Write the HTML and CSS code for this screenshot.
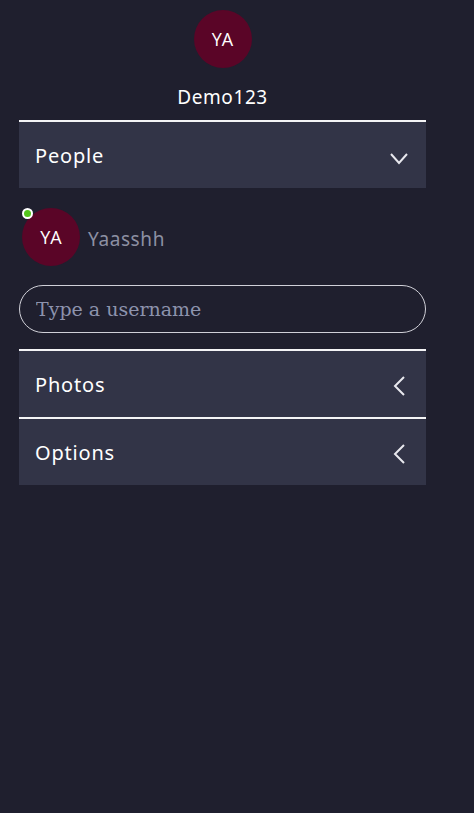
FILE: index.html
```html
<!DOCTYPE html>
<html>
<head>
<meta charset="utf-8">
<link rel="stylesheet" href="styles.css">
</head>
<body>
<aside class="sidebar">
  <header class="profile">
    <div class="avatar avatar-lg">YA</div>
    <div class="profile-name">Demo123</div>
  </header>

  <section class="panel">
    <div class="panel-head">
      <span class="panel-title">People</span>
      <svg class="chev" width="20" height="14" viewBox="0 0 20 14"><path d="M2 2 L10 11 L18 2" fill="none" stroke="#e8e8ee" stroke-width="2"/></svg>
    </div>
  </section>

  <div class="people">
    <div class="contact">
      <div class="avatar-wrap">
        <div class="avatar avatar-md">YA</div>
        <span class="status"></span>
      </div>
      <span class="contact-name">Yaasshh</span>
    </div>
    <input class="search" type="text" placeholder="Type a username">
  </div>

  <section class="panel">
    <div class="panel-head">
      <span class="panel-title">Photos</span>
      <svg class="chev chev-left" width="14" height="20" viewBox="0 0 14 20"><path d="M12 1 L3 10 L12 19" fill="none" stroke="#e8e8ee" stroke-width="2"/></svg>
    </div>
  </section>
  <section class="panel">
    <div class="panel-head">
      <span class="panel-title">Options</span>
      <svg class="chev chev-left" width="14" height="20" viewBox="0 0 14 20"><path d="M12 1 L3 10 L12 19" fill="none" stroke="#e8e8ee" stroke-width="2"/></svg>
    </div>
  </section>
</aside>
</body>
</html>
```

FILE: styles.css
```css
html, body {
  margin: 0;
  padding: 0;
  background: #1f1f2e;
  height: 100%;
}
body {
  font-family: "Noto Sans", "Lato", sans-serif;
  color: #fff;
}
.sidebar {
  width: 445px;
  box-sizing: border-box;
  padding: 10px 19px 0;
  display: flex;
  flex-direction: column;
}
.profile {
  display: flex;
  flex-direction: column;
  align-items: center;
}
.avatar {
  border-radius: 50%;
  background: #5a0527;
  color: #fff;
  display: flex;
  align-items: center;
  justify-content: center;
  font-family: "Open Sans", sans-serif;
  font-size: 18px;
}
.avatar-lg {
  width: 58px;
  height: 58px;
}
.avatar-md {
  width: 58px;
  height: 58px;
}
.profile-name {
  margin-top: 17px;
  font-size: 19px;
  line-height: 24px;
  font-weight: 400;
  letter-spacing: 0.6px;
  margin-bottom: 11px;
}
.panel {
  border-top: 2px solid #f4f4f6;
  background: #323447;
}
.panel-head {
  height: 66px;
  display: flex;
  align-items: center;
  justify-content: space-between;
  padding: 0 17px 0 16px;
}
.panel-title {
  font-size: 20px;
  font-weight: 400;
  letter-spacing: 0.8px;
}
.chev {
  margin-top: 8px;
}
.chev-left {
  margin-top: 4px;
  margin-right: 3px;
}
.people {
  padding: 20px 0 16px;
  display: flex;
  flex-direction: column;
}
.contact {
  display: flex;
  align-items: center;
  gap: 8px;
  padding-left: 3px;
}
.avatar-wrap {
  position: relative;
}
.status {
  position: absolute;
  left: 0;
  top: 0;
  width: 7px;
  height: 7px;
  border-radius: 50%;
  background: #52c41a;
  border: 2px solid #fff;
}
.contact-name {
  color: #8d90a3;
  font-size: 19px;
  letter-spacing: 0.6px;
  padding-top: 3px;
}
.search {
  margin-top: 19px;
  height: 48px;
  box-sizing: border-box;
  border: 1px solid #d0d0d8;
  border-radius: 24px;
  background: transparent;
  padding: 0 16px;
  font-family: "DejaVu Serif", serif;
  font-size: 19px;
  color: #fff;
  outline: none;
}
.search::placeholder {
  color: #8d93ad;
}
```
